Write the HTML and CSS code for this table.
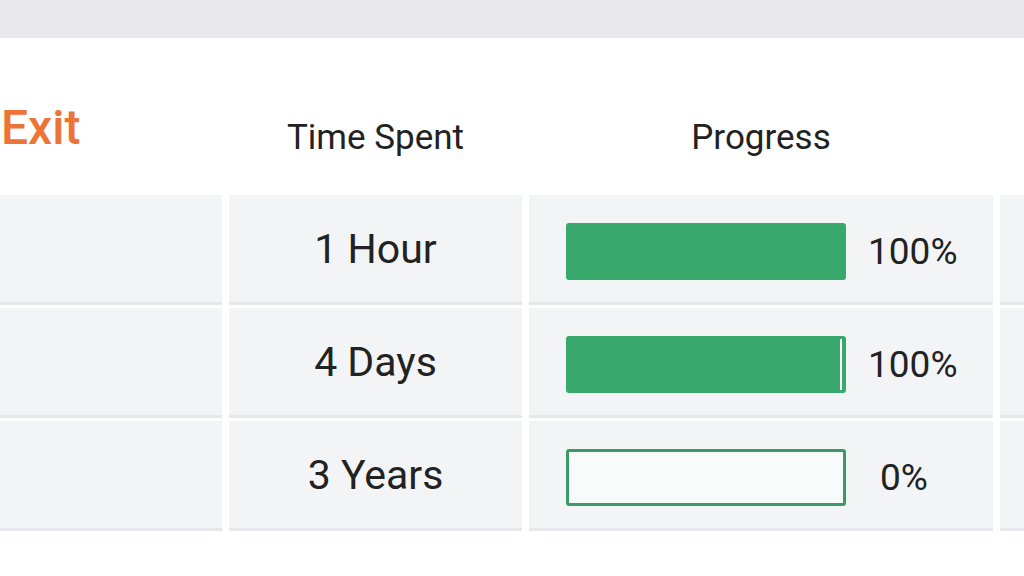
FILE: index.html
```html
<!DOCTYPE html>
<html lang="en">
<head>
<meta charset="utf-8">
<title>Progress</title>
<link rel="stylesheet" href="styles.css">
</head>
<body>
<div class="topbar"></div>
<main class="board">
  <div class="grid">
    <div class="head head-exit"><span class="exit">Exit</span></div>
    <div class="head">Time Spent</div>
    <div class="head">Progress</div>
    <div class="head"></div>

    <div class="cell"></div>
    <div class="cell time">1 Hour</div>
    <div class="cell prog">
      <div class="bar"><div class="fill" style="width:100%"></div></div>
      <span class="pct">100%</span>
    </div>
    <div class="cell"></div>

    <div class="cell"></div>
    <div class="cell time">4 Days</div>
    <div class="cell prog">
      <div class="bar"><div class="fill fill-shine" style="width:100%"></div></div>
      <span class="pct">100%</span>
    </div>
    <div class="cell"></div>

    <div class="cell"></div>
    <div class="cell time">3 Years</div>
    <div class="cell prog">
      <div class="bar bar-empty"><div class="fill" style="width:0%"></div></div>
      <span class="pct pct-zero">0%</span>
    </div>
    <div class="cell"></div>
  </div>
</main>
</body>
</html>
```
FILE: styles.css
```css
* { box-sizing: border-box; }
html, body {
  margin: 0;
  padding: 0;
  background: #ffffff;
  width: 1024px;
  height: 576px;
  overflow: hidden;
  font-family: Roboto, "Liberation Sans", Arial, sans-serif;
  color: #222222;
}
.topbar {
  height: 38px;
  background: #e9e9eb;
}
.board {
  margin-left: -78px;
}
.grid {
  display: grid;
  grid-template-columns: 300px 293px 464px 200px;
  grid-template-rows: 154px 110px 110px 110px;
  column-gap: 7px;
  row-gap: 3px;
}
.head {
  display: flex;
  align-items: center;
  justify-content: center;
  font-size: 35px;
  line-height: 1;
  padding-top: 82px;
  padding-bottom: 37px;
  color: #222222;
}
.head-exit {
  justify-content: flex-start;
  padding-left: 79px;
  padding-top: 50px;
  padding-bottom: 25px;
}
.exit {
  color: #ee7336;
  font-size: 48px;
  font-weight: 500;
}
.cell {
  background: #f3f4f6;
  border-bottom: 3px solid #e6e7ea;
}
.time {
  display: flex;
  align-items: center;
  justify-content: center;
  font-size: 41px;
  color: #222222;
}
.prog {
  display: flex;
  align-items: center;
  padding-left: 37px;
  padding-top: 6px;
  gap: 22px;
}
.bar {
  width: 280px;
  height: 57px;
  border-radius: 3px;
  background: #f7fbf9;
  overflow: hidden;
  position: relative;
}
.bar-empty {
  border: 3px solid #3b9a69;
}
.fill {
  height: 100%;
  background: #38a86c;
}
.fill-shine {
  position: relative;
}
.fill-shine::after {
  content: "";
  position: absolute;
  right: 4px;
  top: 3px;
  bottom: 3px;
  width: 2px;
  background: #ffffff;
}
.pct {
  font-size: 37px;
  color: #222222;
}
.pct-zero {
  padding-left: 12px;
}
```
